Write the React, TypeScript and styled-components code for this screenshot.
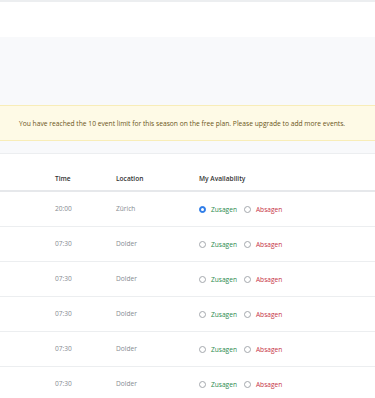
import React from "react";
import styled, { createGlobalStyle } from "styled-components";

const Global = createGlobalStyle`
  html, body { margin: 0; padding: 0; background: #ffffff; }
  body { font-family: "Open Sans", "Noto Sans", "Liberation Sans", sans-serif; overflow: hidden; }
  * { box-sizing: border-box; }
`;

const TopBar = styled.header`
  height: 37px;
  border-top: 2px solid #eceef0;
  background: #ffffff;
`;

const GraySection = styled.section`
  background: #f8f9fb;
  padding-top: 68px;
  padding-bottom: 12px;
  border-bottom: 1px solid #eceef0;
`;

const Alert = styled.div`
  height: 36px;
  display: flex;
  align-items: center;
  padding-left: 19px;
  background: #fefae6;
  border-top: 1px solid #f8edb8;
  border-bottom: 1px solid #f8edb8;
  color: #6b5518;
  font-size: 6.7px;
  white-space: nowrap;
`;

const Table = styled.div`
  background: #ffffff;
`;

const Row = styled.div<{ $head?: boolean }>`
  display: grid;
  grid-template-columns: 61px 83px 1fr;
  padding-left: 55px;
  align-items: ${(p) => (p.$head ? "end" : "center")};
  height: ${(p) => (p.$head ? "38px" : "35px")};
  padding-bottom: ${(p) => (p.$head ? "6px" : "0")};
  border-bottom: ${(p) => (p.$head ? "2px solid #e6e8eb" : "1px solid #eceef0")};
  font-size: 6.6px;
  color: ${(p) => (p.$head ? "#333333" : "#868b91")};
  font-weight: ${(p) => (p.$head ? 600 : 400)};
`;

const Cell = styled.div`
  white-space: nowrap;
  line-height: 10px;
`;

const Options = styled.div`
  display: flex;
  align-items: center;
  gap: 7px;
`;

const Option = styled.label`
  display: flex;
  align-items: center;
  gap: 5px;
`;

const Radio = styled.span<{ $checked?: boolean }>`
  width: 7px;
  height: 7px;
  border-radius: 50%;
  border: 1px solid ${(p) => (p.$checked ? "#2f7de8" : "#a4a8ad")};
  background: ${(p) => (p.$checked ? "#2f7de8" : "#ffffff")};
  display: flex;
  align-items: center;
  justify-content: center;
  &::after {
    content: "";
    width: 3px;
    height: 3px;
    border-radius: 50%;
    background: ${(p) => (p.$checked ? "#ffffff" : "transparent")};
  }
`;

const Label = styled.span<{ $tone: "yes" | "no" }>`
  color: ${(p) => (p.$tone === "yes" ? "#2a8a4e" : "#c6323f")};
`;

const rows = [
  { time: "20:00", loc: "Zürich", yes: true },
  { time: "07:30", loc: "Dolder", yes: false },
  { time: "07:30", loc: "Dolder", yes: false },
  { time: "07:30", loc: "Dolder", yes: false },
  { time: "07:30", loc: "Dolder", yes: false },
  { time: "07:30", loc: "Dolder", yes: false },
];

export default function App() {
  return (
    <>
      <Global />
      <TopBar />
      <GraySection>
        <Alert>
          You have reached the 10 event limit for this season on the free plan. Please upgrade to add more events.
        </Alert>
      </GraySection>
      <Table>
        <Row $head>
          <Cell>Time</Cell>
          <Cell>Location</Cell>
          <Cell>My Availability</Cell>
        </Row>
        {rows.map((r, i) => (
          <Row key={i}>
            <Cell>{r.time}</Cell>
            <Cell>{r.loc}</Cell>
            <Options>
              <Option>
                <Radio $checked={r.yes} />
                <Label $tone="yes">Zusagen</Label>
              </Option>
              <Option>
                <Radio />
                <Label $tone="no">Absagen</Label>
              </Option>
            </Options>
          </Row>
        ))}
      </Table>
    </>
  );
}
